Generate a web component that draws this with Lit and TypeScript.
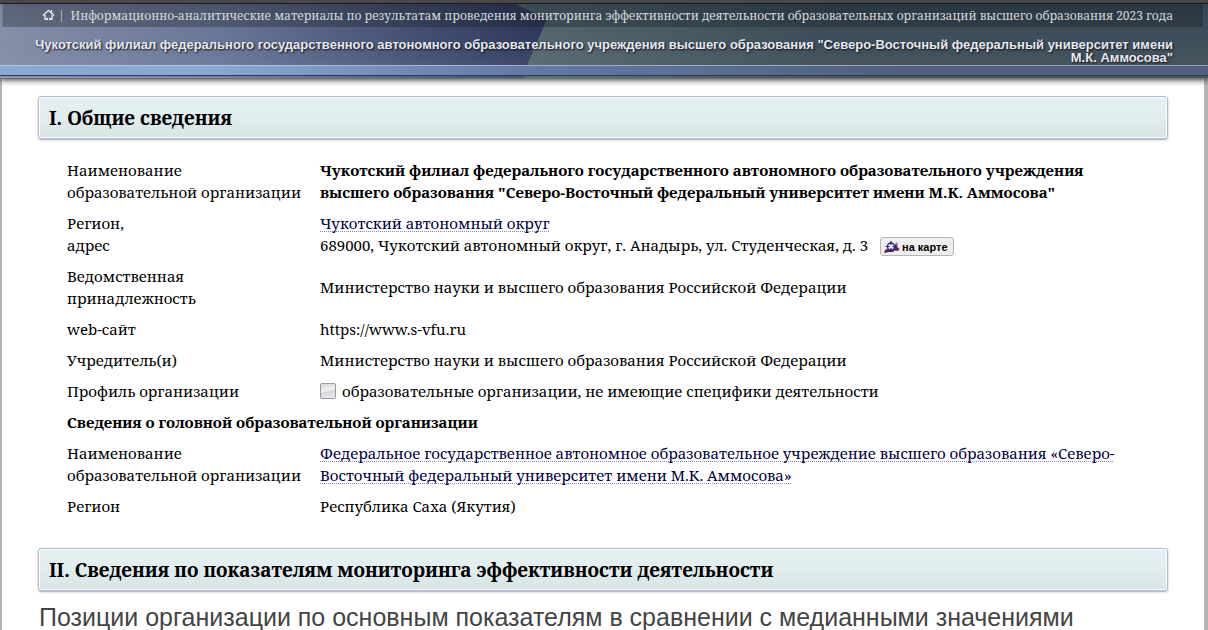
import { LitElement, html, css } from "lit";
import { customElement } from "lit/decorators.js";

@customElement("app-root")
export class AppRoot extends LitElement {
  static styles = css`
    :host {
      display: block;
      box-sizing: border-box;
      background: #b4b4b4;
      color: #000;
      font: 15px/22px "Noto Serif", "Droid Serif", "DejaVu Serif Condensed", serif;
    }
    a {
      color: #000040;
      text-decoration: underline dotted 1px #8888bb;
      text-underline-offset: 2px;
      text-decoration-skip-ink: none;
    }
    .head {
      position: relative;
      z-index: 1;
      border-top: 3px solid #494949;
      background: #4a5862;
      box-shadow: 0 0 7px 1px #000;
    }
    .art { position: absolute; inset: 0; width: 100%; height: 100%; }
    .inner { position: relative; border-top: 1px solid #15181c; }
    .crumbs {
      display: flex;
      justify-content: flex-end;
      align-items: center;
      margin: 0 5px 0 2px;
      padding: 0 30px;
      height: 23px;
      background: rgba(20, 24, 28, 0.3);
      border-left: 1px solid rgba(130, 150, 200, 0.4);
      color: #d5d9de;
      font-size: 12px;
      line-height: 22px;
      white-space: nowrap;
    }
    .home { display: flex; margin: 0 6px 2px 0; }
    .bar { width: 1px; height: 12px; background: #a8afba; margin-right: 8px; }
    .crumbs p { margin: 0; }
    .org {
      margin: 0;
      padding: 11px 35px 1px 30px;
      text-align: right;
      font: bold 13px/13px "Liberation Sans", Arial, sans-serif;
      color: #e6e8f4;
      text-shadow: 1px 1px 2px #111;
    }
    .strip {
      height: 9px;
      background: linear-gradient(90deg, #8ba8d5 0, #8ba8d5 17%, #647ba5 43%, #50607e 75%, #50607e);
      border-top: 1px solid rgba(205, 220, 235, 0.55);
      border-bottom: 1px solid #2c3b55;
    }
    .inner::after { content: ""; display: block; height: 2px; }
    main {
      margin: 0 4px 0 2px;
      padding: 18px 36px 0;
      background: #fff;
    }
    h2 {
      margin: 0;
      padding: 8px 10px 7px;
      border: 1px solid #b0bad6;
      border-radius: 3px;
      box-shadow: inset 0 0 0 1px #fff, 0 1px 2px #aab;
      background: linear-gradient(#e4f0f2, #e2edee 45%, #d8e4e4);
      font-size: 19px;
      line-height: 26px;
    }
    table { border-collapse: collapse; margin: 16px 0 26px 29px; }
    th, td { padding: 4px 0 5px; text-align: left; font-weight: normal; }
    th { width: 253px; }
    th.wide, .strong { font-weight: bold; }
    .map {
      display: inline-flex;
      align-items: center;
      gap: 2px;
      height: 19px;
      margin: -2px 0 -2px 8px;
      padding: 0 5px 0 3px;
      vertical-align: middle;
      border: 1px solid #b5b5b5;
      border-radius: 3px;
      background: #eee;
      color: #000;
      font: bold 11px/16px "Liberation Sans", Arial, sans-serif;
    }
    .profile { display: flex; align-items: center; gap: 6px; }
    .profile input {
      appearance: none;
      box-sizing: border-box;
      width: 16px;
      height: 16px;
      margin: 0;
      border: 1px solid #999ba6;
      border-radius: 2px;
      background: linear-gradient(165deg, #d8d8d8, #f0f0f0 45%, #d8d8d8 55%, #eee);
    }
    h3 {
      margin: 11px 0 0 1px;
      color: #444;
      font: 25px/30px "Liberation Sans", Arial, sans-serif;
    }
  `;

  render() {
    return html`
      <header class="head">
        <svg class="art" viewBox="0 0 1208 75" preserveAspectRatio="none" aria-hidden="true">
          <defs>
            <linearGradient id="l" x1="0" y1="0" x2="1" y2="0">
              <stop offset="0" stop-color="#8892aa" />
              <stop offset=".4" stop-color="#6b7897" />
              <stop offset=".75" stop-color="#445070" />
              <stop offset="1" stop-color="#2b3558" />
            </linearGradient>
            <linearGradient id="v" x1="0" y1="0" x2="0" y2="1">
              <stop offset="0" stop-color="#18204a" stop-opacity=".12" />
              <stop offset=".4" stop-color="#50608a" stop-opacity=".05" />
              <stop offset="1" stop-color="#98a4c0" stop-opacity=".25" />
            </linearGradient>
            <linearGradient id="r" gradientUnits="userSpaceOnUse" x1="530" y1="60" x2="820" y2="10">
              <stop offset="0" stop-color="#647780" />
              <stop offset="1" stop-color="#3c4c57" />
            </linearGradient>
            <linearGradient id="d" x1="0" y1="0" x2="0" y2="1">
              <stop offset="0" stop-color="#2c4050" stop-opacity=".4" />
              <stop offset="1" stop-color="#59656c" stop-opacity=".45" />
            </linearGradient>
          </defs>
          <path fill="url(#r)" d="M500 0H1208V75H500Z" />
          <path fill="url(#d)" d="M500 0H1208V75H500Z" />
          <path fill="url(#l)" d="M0 0H513L547 16L527 62L523 75H0Z" />
          <path fill="url(#v)" d="M0 0H513L547 16L527 62L523 75H0Z" />
        </svg>
        <div class="inner">
          <nav class="crumbs">
            <a class="home" href="#" aria-label="Главная">
              <svg width="13" height="12" viewBox="0 0 13 12" fill="none" stroke="#e4e7ec" stroke-width="1.4">
                <path d="M.8 6.5L6.5 1.500L12.200 6.500M3 6V10.300H5.300V8.800M7.700 8.800V10.300H10V6M9.500 1V3.500" />
              </svg>
            </a>
            <span class="bar"></span>
            <p>Информационно-аналитические материалы по результатам проведения мониторинга эффективности деятельности образовательных организаций высшего образования 2023 года</p>
          </nav>
          <h1 class="org">Чукотский филиал федерального государственного автономного образовательного учреждения высшего образования "Северо-Восточный федеральный университет имени М.К. Аммосова"</h1>
          <div class="strip"></div>
        </div>
      </header>
      <main>
        <h2>I. Общие сведения</h2>
        <table>
          <tr>
            <th scope="row">Наименование<br />образовательной организации</th>
            <td class="strong">Чукотский филиал федерального государственного автономного образовательного учреждения<br />высшего образования "Северо-Восточный федеральный университет имени М.К. Аммосова"</td>
          </tr>
          <tr>
            <th scope="row">Регион,<br />адрес</th>
            <td>
              <a href="#">Чукотский автономный округ</a><br />689000, Чукотский автономный округ, г. Анадырь, ул. Студенческая, д. 3
              <button class="map" type="button">
                <svg width="16" height="14" viewBox="0 0 16 14" aria-hidden="true">
                  <path fill="#a58aa8" d="M2 9L5 7L10 8L12 3L13 2L14 4L13.500 7L16 9L14 11H11L9 11L5 11L2 12Z" />
                  <path fill="#5a2350" d="M0 13L1 10L4 9L8 11L10 9L12 3L13 7L15 9L14 11L11 10L9 12H5Z" />
                  <circle cx="7" cy="6.500" r="3.500" fill="#eef" stroke="#28208c" stroke-width="1.300" />
                  <path stroke="#28208c" stroke-width="1.200" d="M7 1V5M7 8V12M1.500 6.500H5.500M8.500 6.500H12.500" />
                </svg>
                на карте
              </button>
            </td>
          </tr>
          <tr>
            <th scope="row">Ведомственная<br />принадлежность</th>
            <td>Министерство науки и высшего образования Российской Федерации</td>
          </tr>
          <tr>
            <th scope="row">web-сайт</th>
            <td>https://www.s-vfu.ru</td>
          </tr>
          <tr>
            <th scope="row">Учредитель(и)</th>
            <td>Министерство науки и высшего образования Российской Федерации</td>
          </tr>
          <tr>
            <th scope="row">Профиль организации</th>
            <td>
              <label class="profile"><input type="checkbox" />образовательные организации, не имеющие специфики деятельности</label>
            </td>
          </tr>
          <tr>
            <th class="wide" colspan="2">Сведения о головной образовательной организации</th>
          </tr>
          <tr>
            <th scope="row">Наименование<br />образовательной организации</th>
            <td><a href="#">Федеральное государственное автономное образовательное учреждение высшего образования «Северо-<br />Восточный федеральный университет имени М.К. Аммосова»</a></td>
          </tr>
          <tr>
            <th scope="row">Регион</th>
            <td>Республика Саха (Якутия)</td>
          </tr>
        </table>
        <h2>II. Сведения по показателям мониторинга эффективности деятельности</h2>
        <h3>Позиции организации по основным показателям в сравнении с медианными значениями</h3>
      </main>
    `;
  }
}
